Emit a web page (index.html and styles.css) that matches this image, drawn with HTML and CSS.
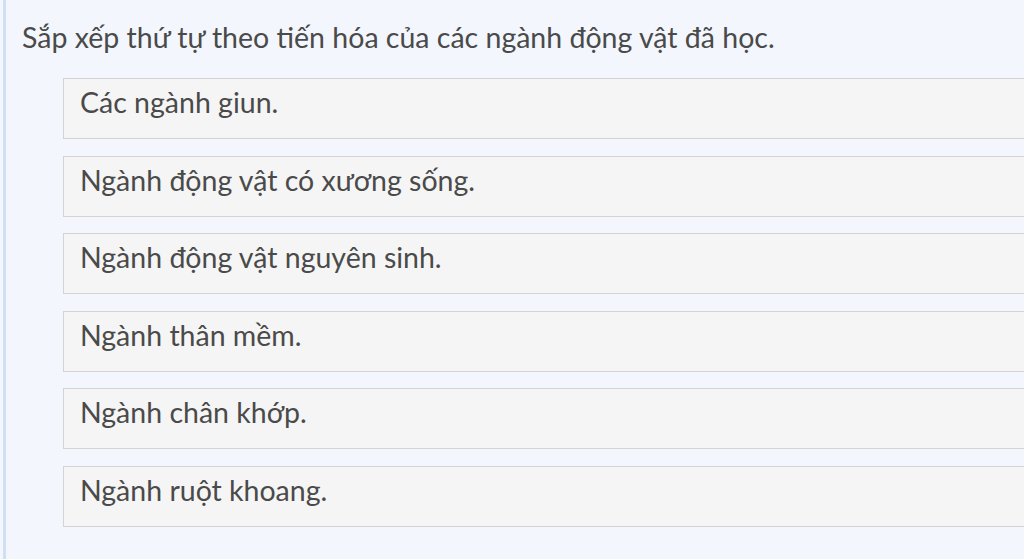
FILE: index.html
```html
<!DOCTYPE html>
<html lang="vi">
<head>
    <meta charset="UTF-8">
    <meta name="viewport" content="width=device-width, initial-scale=1.0">
    <title>Sắp xếp thứ tự</title>
    <link rel="stylesheet" href="styles.css">
</head>
<body>
    <div class="question">
        <p class="question-title">Sắp xếp thứ tự theo tiến hóa của các ngành động vật đã học.</p>

        <!-- Sortable answers -->
        <ul class="answer-list">
            <li class="answer-item">Các ngành giun.</li>
            <li class="answer-item">Ngành động vật có xương sống.</li>
            <li class="answer-item">Ngành động vật nguyên sinh.</li>
            <li class="answer-item">Ngành thân mềm.</li>
            <li class="answer-item">Ngành chân khớp.</li>
            <li class="answer-item">Ngành ruột khoang.</li>
        </ul>
    </div>
</body>
</html>
```

FILE: styles.css
```css
html, body {
    height: 100%;
}

body {
    font-family: Lato, "Open Sans", sans-serif;
    background-color: #f3f7fd;
    color: #4a4a4a;
    margin: 0;
    overflow: hidden;
}

.question {
    height: 100%;
    margin-left: 3px;
    border-left: 3px solid #cfe0f3;
    padding: 19px 0 0 16px;
    box-sizing: border-box;
}

.question-title {
    font-size: 28.5px;
    line-height: 36px;
    margin: 0 0 23px;
    white-space: nowrap;
}

.answer-list {
    list-style: none;
    margin: 0;
    padding: 0 0 0 41px;
}

.answer-item {
    background-color: #f5f5f5;
    border: 1px solid #d3d3d3;
    border-right: none;
    font-size: 28.5px;
    line-height: 34px;
    padding: 6px 16px 19px;
    margin-bottom: 16.6px;
    white-space: nowrap;
}
```
